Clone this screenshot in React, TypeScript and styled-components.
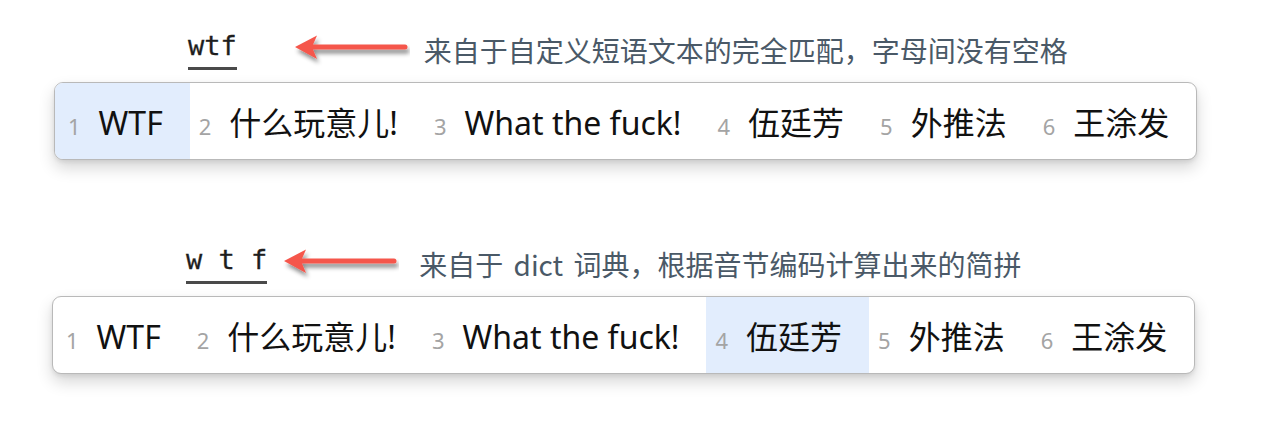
import styled, { createGlobalStyle } from "styled-components";

const GlobalStyle = createGlobalStyle`
  html, body {
    margin: 0;
    padding: 0;
    background: #ffffff;
  }
  body {
    font-family: "Noto Sans", "Noto Sans CJK SC", sans-serif;
  }
`;

const Page = styled.div`
  width: 1262px;
  height: 438px;
  padding-top: 31px;
  box-sizing: border-box;
  display: flex;
  flex-direction: column;
  gap: 85px;
`;

const Section = styled.section<{ $indent: number }>`
  display: flex;
  flex-direction: column;
  gap: 12px;
  padding-left: ${(p) => p.$indent}px;
`;

const LabelRow = styled.div<{ $codeGap: number; $textGap: number; $codeIndent: number }>`
  display: flex;
  align-items: center;
  padding-left: ${(p) => p.$codeIndent}px;
  svg {
    margin-left: ${(p) => p.$codeGap}px;
    margin-right: ${(p) => p.$textGap}px;
    margin-top: -2px;
  }
`;

// 입력한 코드 (밑줄 포함)
const Code = styled.span`
  font-family: "DejaVu Sans Mono", monospace;
  font-size: 27px;
  line-height: 30px;
  color: #1e1e1e;
  padding-bottom: 6px;
  border-bottom: 3px solid #4a4a4a;
  white-space: pre;
  -webkit-text-stroke: 0.3px #1e1e1e;
`;

const Note = styled.span<{ $spacing?: number }>`
  font-family: "Noto Sans CJK SC", "Noto Sans", sans-serif;
  font-size: 28px;
  line-height: 34px;
  color: #4a5967;
  white-space: pre;
  margin-top: -1px;
  word-spacing: ${(p) => p.$spacing ?? 0}px;
`;

const Panel = styled.div`
  width: 1143px;
  height: 78px;
  box-sizing: border-box;
  border: 1px solid #b9b9b9;
  border-radius: 9px;
  background: #fff;
  overflow: hidden;
  display: flex;
  box-shadow: 0 8px 16px rgba(0, 0, 0, 0.16), 0 2px 4px rgba(0, 0, 0, 0.08);
`;

const Cell = styled.div<{ $active?: boolean }>`
  display: flex;
  align-items: baseline;
  padding: 24px 27px 0 9px;
  background: ${(p) => (p.$active ? "#e2edfd" : "transparent")};
  &:first-child {
    padding-left: 13px;
  }
`;

const Index = styled.span`
  font-size: 22px;
  line-height: 32px;
  color: #a4a4a4;
  margin-right: 18px;
`;

const Word = styled.span`
  font-family: "Noto Sans", "Noto Sans CJK SC", sans-serif;
  font-size: 32px;
  line-height: 32px;
  color: #111;
  white-space: nowrap;
`;

function Arrow() {
  return (
    <svg width="116" height="34" viewBox="0 0 116 34">
      <defs>
        <filter id="arrowShadow" x="-20%" y="-40%" width="140%" height="200%">
          <feDropShadow dx="2" dy="4" stdDeviation="2" floodColor="#000" floodOpacity="0.45" />
        </filter>
      </defs>
      <g filter="url(#arrowShadow)">
        <path d="M1 14 L23 2.5 L18 14 L23 26 Z" fill="#f5574c" />
        <line x1="17" y1="14" x2="111" y2="14" stroke="#f5574c" strokeWidth="5" strokeLinecap="round" />
      </g>
    </svg>
  );
}

const words = ["WTF", "什么玩意儿!", "What the fuck!", "伍廷芳", "外推法", "王涂发"];

function Candidates({ active }: { active: number }) {
  return (
    <Panel>
      {words.map((w, i) => (
        <Cell key={w} $active={i === active}>
          <Index>{i + 1}</Index>
          <Word>{w}</Word>
        </Cell>
      ))}
    </Panel>
  );
}

export default function App() {
  return (
    <>
      <GlobalStyle />
      <Page>
        <Section $indent={54}>
          <LabelRow $codeIndent={134} $codeGap={57} $textGap={14}>
            <Code>wtf</Code>
            <Arrow />
            <Note>来自于自定义短语文本的完全匹配，字母间没有空格</Note>
          </LabelRow>
          <Candidates active={0} />
        </Section>
        <Section $indent={52}>
          <LabelRow $codeIndent={134} $codeGap={16} $textGap={20}>
            <Code>w t f</Code>
            <Arrow />
            <Note $spacing={4}>来自于 dict 词典，根据音节编码计算出来的简拼</Note>
          </LabelRow>
          <Candidates active={3} />
        </Section>
      </Page>
    </>
  );
}
